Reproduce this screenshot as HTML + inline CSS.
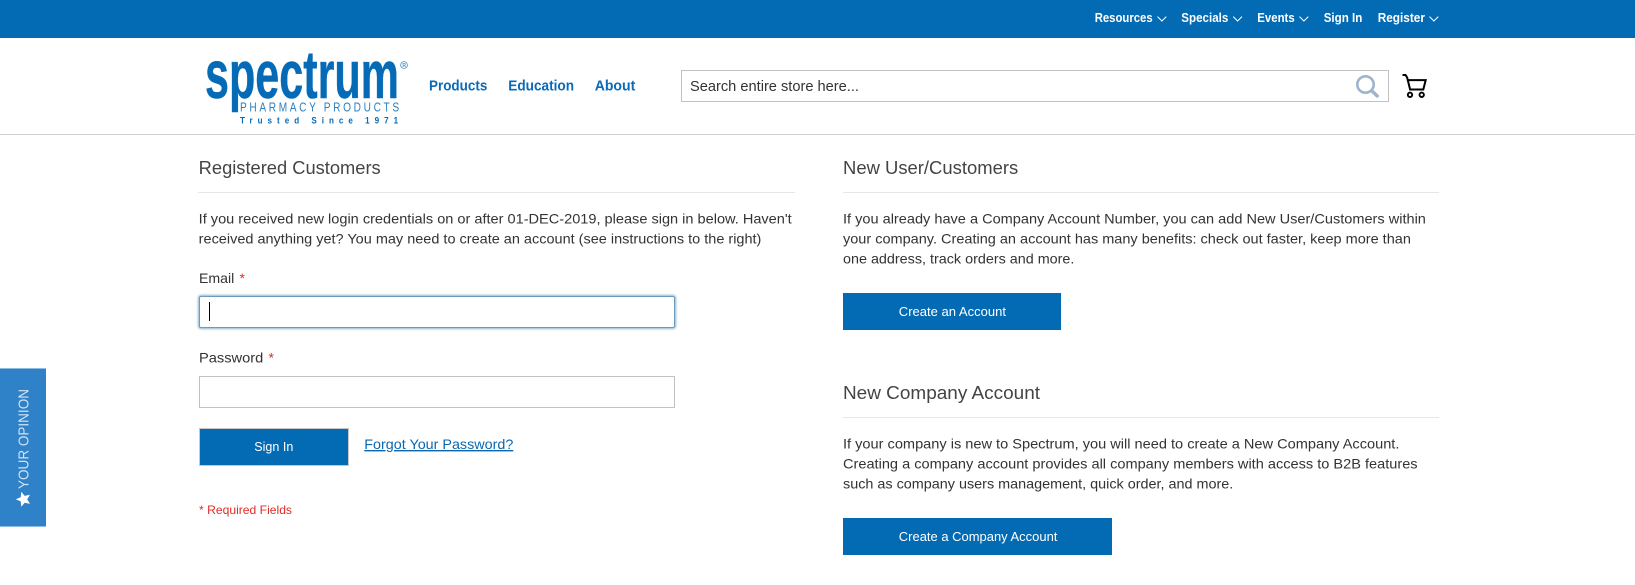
<!DOCTYPE html>
<html lang="en">
<head>
<meta charset="utf-8">
<title>Customer Login</title>
<style>
html,body{margin:0;padding:0;background:#fff}
#page{position:relative;width:1635px;height:585px;overflow:hidden;background:#fff;font-family:"Liberation Sans",sans-serif}
#page div,#page input,#page button{position:absolute;box-sizing:border-box;margin:0;padding:0}
input{background:#fff;border:1px solid #c2c2c2;outline:0}
button{background:#036ab4;border:0}
svg.o{position:absolute;left:0;top:0;pointer-events:none}
svg.o text{font-family:"Liberation Sans",sans-serif}
.t{font-size:14px;fill:#333}
.h{font-size:18px;fill:#444}
.b{font-size:12.5px;fill:#fff}
.n{font-size:12.5px;font-weight:bold;fill:#fff}
.m{font-size:14.5px;font-weight:bold;fill:#0a6ab8}
</style>
</head>
<body>
<div id="page">
  <div style="left:0;top:0;width:1635px;height:38px;background:#036ab4"></div>
  <div style="left:0;top:134px;width:1635px;height:1px;background:#cfcfcf"></div>
  <input style="left:681px;top:70px;width:708px;height:32px" aria-label="Search">
  <div style="left:198px;top:192px;width:597px;height:1px;background:#e6e6e6"></div>
  <div style="left:843px;top:192px;width:596px;height:1px;background:#e6e6e6"></div>
  <div style="left:843px;top:417px;width:596px;height:1px;background:#e6e6e6"></div>
  <input style="left:199px;top:296px;width:476px;height:32px;border-color:#6e9bbb;border-radius:2px;box-shadow:0 0 2px 1px #8db4d0" aria-label="Email">
  <div style="left:209px;top:302px;width:1px;height:19px;background:#000"></div>
  <input type="password" style="left:199px;top:376px;width:476px;height:32px" aria-label="Password">
  <button style="left:199px;top:428px;width:150px;height:38px;border:1px solid #c8c8c8"></button>
  <button style="left:843px;top:293px;width:218px;height:37px"></button>
  <button style="left:843px;top:518px;width:269px;height:37px"></button>
  <div style="left:0;top:368px;width:46px;height:159px;background:#2f81c8;border-top:1px solid #8fbce3;border-bottom:1px solid #8fbce3"></div>

  <svg class="o" width="1635" height="585" viewBox="0 0 1635 585" xmlns="http://www.w3.org/2000/svg">
    <!-- top nav -->
    <text class="n" x="1094.7" y="22" textLength="58" lengthAdjust="spacingAndGlyphs">Resources</text>
    <text class="n" x="1181.3" y="22" textLength="47" lengthAdjust="spacingAndGlyphs">Specials</text>
    <text class="n" x="1257.3" y="22" textLength="37.4" lengthAdjust="spacingAndGlyphs">Events</text>
    <text class="n" x="1323.7" y="22" textLength="38.6" lengthAdjust="spacingAndGlyphs">Sign In</text>
    <text class="n" x="1377.7" y="22" textLength="47.3" lengthAdjust="spacingAndGlyphs">Register</text>
    <g fill="none" stroke="#fff" stroke-width="1">
      <path d="M1157.5 16.6l4.4 4.4 4.4-4.4"/>
      <path d="M1233.2 16.6l4.4 4.4 4.4-4.4"/>
      <path d="M1299.5 16.6l4.4 4.4 4.4-4.4"/>
      <path d="M1429.5 16.6l4.4 4.4 4.4-4.4"/>
    </g>

    <!-- logo -->
    <text x="205" y="98" font-size="68" font-weight="bold" fill="#056bb6" stroke="#056bb6" stroke-width="0.5" textLength="194" lengthAdjust="spacingAndGlyphs">spectrum</text>
    <text transform="translate(240 111.7) scale(.78 1)" x="0" y="0" font-size="13" fill="#2a7fc0" textLength="204" lengthAdjust="spacing">PHARMACY PRODUCTS</text>
    <text transform="translate(240 123.3) scale(.85 1)" x="0" y="0" font-size="9.5" font-weight="bold" fill="#056bb6" textLength="186" lengthAdjust="spacing">Trusted Since 1971</text>
    <circle cx="404" cy="65" r="3.4" fill="none" stroke="#4a8fc8" stroke-width="0.8"/>
    <text x="402.4" y="67" font-size="5" font-weight="bold" fill="#4a8fc8">R</text>

    <!-- main nav -->
    <text class="m" x="429" y="90.7" textLength="58.3" lengthAdjust="spacingAndGlyphs">Products</text>
    <text class="m" x="508.3" y="90.7" textLength="65.7" lengthAdjust="spacingAndGlyphs">Education</text>
    <text class="m" x="594.7" y="90.7" textLength="40.6" lengthAdjust="spacingAndGlyphs">About</text>

    <!-- search -->
    <text x="690" y="91" font-size="14.5" fill="#333" textLength="169" lengthAdjust="spacingAndGlyphs">Search entire store here...</text>
    <circle cx="1365.5" cy="84.5" r="8.2" fill="none" stroke="#9db5cc" stroke-width="2.6"/>
    <path d="M1371.5 90.5l5.7 5.5" fill="none" stroke="#9db5cc" stroke-width="3.4" stroke-linecap="round"/>

    <!-- cart -->
    <path d="M1402.5 75h3l1.6 2.4 3 12.1h13.2l2.4-9.4h-18.9" fill="none" stroke="#000" stroke-width="2" stroke-linejoin="miter"/>
    <circle cx="1410" cy="94.8" r="2.2" fill="none" stroke="#000" stroke-width="1.9"/>
    <circle cx="1421.7" cy="94.8" r="2.2" fill="none" stroke="#000" stroke-width="1.9"/>

    <!-- left column -->
    <text class="h" x="198.7" y="174" textLength="182" lengthAdjust="spacingAndGlyphs">Registered Customers</text>
    <text class="t" x="198.7" y="223.3" textLength="593" lengthAdjust="spacingAndGlyphs">If you received new login credentials on or after 01-DEC-2019, please sign in below. Haven't</text>
    <text class="t" x="198.7" y="243.3" textLength="562.7" lengthAdjust="spacingAndGlyphs">received anything yet? You may need to create an account (see instructions to the right)</text>
    <text class="t" x="199" y="283" textLength="35.3" lengthAdjust="spacingAndGlyphs">Email</text>
    <text x="239.5" y="283" font-size="14" fill="#e02b27">*</text>
    <text class="t" x="199" y="362.7" textLength="64.3" lengthAdjust="spacingAndGlyphs">Password</text>
    <text x="268.5" y="362.7" font-size="14" fill="#e02b27">*</text>
    <text class="b" x="254.3" y="451" font-size="13" textLength="39" lengthAdjust="spacingAndGlyphs">Sign In</text>
    <text x="364.3" y="449" font-size="14" fill="#0a67b0" text-decoration="underline" textLength="149" lengthAdjust="spacingAndGlyphs">Forgot Your Password?</text>
    <text x="199" y="514" font-size="12" fill="#e02b27" textLength="93" lengthAdjust="spacingAndGlyphs">* Required Fields</text>

    <!-- right column -->
    <text class="h" x="843" y="174" textLength="175.2" lengthAdjust="spacingAndGlyphs">New User/Customers</text>
    <text class="t" x="843" y="223.3" textLength="582.9" lengthAdjust="spacingAndGlyphs">If you already have a Company Account Number, you can add New User/Customers within</text>
    <text class="t" x="843" y="243.3" textLength="567.9" lengthAdjust="spacingAndGlyphs">your company. Creating an account has many benefits: check out faster, keep more than</text>
    <text class="t" x="843" y="263.3" textLength="231.4" lengthAdjust="spacingAndGlyphs">one address, track orders and more.</text>
    <text class="b" x="898.8" y="316" textLength="107.2" lengthAdjust="spacingAndGlyphs">Create an Account</text>

    <text class="h" x="843" y="399" textLength="197" lengthAdjust="spacingAndGlyphs">New Company Account</text>
    <text class="t" x="843" y="448.3" textLength="556.4" lengthAdjust="spacingAndGlyphs">If your company is new to Spectrum, you will need to create a New Company Account.</text>
    <text class="t" x="843" y="468.3" textLength="574.6" lengthAdjust="spacingAndGlyphs">Creating a company account provides all company members with access to B2B features</text>
    <text class="t" x="843" y="488.3" textLength="390.3" lengthAdjust="spacingAndGlyphs">such as company users management, quick order, and more.</text>
    <text class="b" x="898.8" y="541" textLength="158.6" lengthAdjust="spacingAndGlyphs">Create a Company Account</text>

    <!-- side tab -->
    <text transform="translate(28.3 489) rotate(-90)" font-size="14.5" fill="#cfe2f3" textLength="100" lengthAdjust="spacingAndGlyphs">YOUR OPINION</text>
    <path d="M23 492l2.1 5 5.4.5-4.1 3.5 1.2 5.3-4.6-2.8-4.6 2.8 1.2-5.3-4.1-3.5 5.4-.5z" fill="#fff" transform="rotate(-90 23 499.3)"/>
  </svg>
</div>
</body>
</html>
